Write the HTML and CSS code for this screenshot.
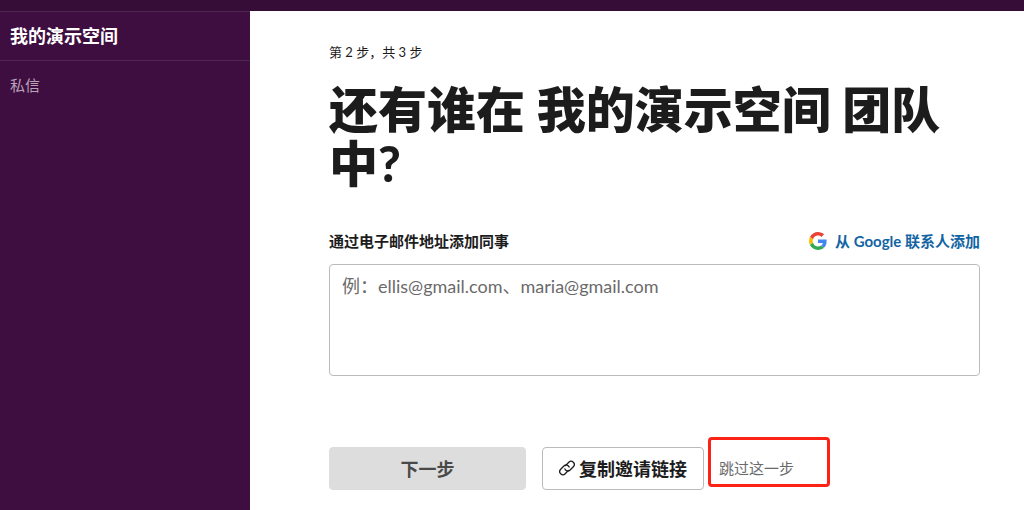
FILE: index.html
```html
<!DOCTYPE html>
<html lang="zh-CN">
<head>
    <meta charset="UTF-8">
    <meta name="viewport" content="width=device-width, initial-scale=1.0">
    <title>我的演示空间</title>
    <link rel="stylesheet" href="styles.css">
</head>
<body>
    <header class="top-bar"></header>
    <div class="workspace">
        <aside class="sidebar">
            <div class="team-name">我的演示空间</div>
            <nav class="channels">
                <a href="#">私信</a>
            </nav>
        </aside>

        <main class="setup">
            <p class="step">第 2 步，共 3 步</p>
            <h1>还有谁在 我的演示空间 团队中?</h1>

            <form>
                <div class="field-header">
                    <label for="emails">通过电子邮件地址添加同事</label>
                    <a class="google-link" href="#">
                        <svg width="18" height="18" viewBox="0 0 48 48" aria-hidden="true">
                            <path fill="#ea4335" d="M24 9.5c3.54 0 6.71 1.22 9.21 3.6l6.85-6.85C35.9 2.38 30.47 0 24 0 14.62 0 6.51 5.38 2.56 13.22l7.98 6.19C12.43 13.72 17.74 9.5 24 9.5z"/>
                            <path fill="#4285f4" d="M46.98 24.55c0-1.57-.15-3.09-.38-4.55H24v9.02h12.94c-.58 2.96-2.26 5.48-4.78 7.18l7.73 6c4.51-4.18 7.09-10.36 7.09-17.65z"/>
                            <path fill="#fbbc05" d="M10.53 28.59c-.48-1.45-.76-2.99-.76-4.59s.27-3.14.76-4.59l-7.98-6.19C.92 16.46 0 20.12 0 24c0 3.88.92 7.54 2.56 10.78l7.97-6.19z"/>
                            <path fill="#34a853" d="M24 48c6.48 0 11.93-2.13 15.89-5.81l-7.73-6c-2.15 1.45-4.92 2.3-8.16 2.3-6.26 0-11.57-4.22-13.47-9.91l-7.98 6.19C6.51 42.62 14.62 48 24 48z"/>
                        </svg>
                        从 Google 联系人添加
                    </a>
                </div>
                <textarea id="emails" name="emails" placeholder="例：ellis@gmail.com、maria@gmail.com"></textarea>

                <div class="actions">
                    <button class="btn btn-next" type="submit">下一步</button>
                    <button class="btn btn-copy" type="button">
                        <svg width="16" height="16" viewBox="0 0 16 16" fill="none" stroke="currentColor" stroke-width="1.3" stroke-linecap="round" stroke-linejoin="round" aria-hidden="true">
                            <path d="M6.6 5.6 9.8 2.3a3.2 3.2 0 0 1 4.5 0 3.2 3.2 0 0 1 0 4.5l-3.2 3.2a3.2 3.2 0 0 1-4.5 0 3 3 0 0 1-.7-1.1"/>
                            <path d="M9.4 10.4 6.2 13.7a3.2 3.2 0 0 1-4.5 0 3.2 3.2 0 0 1 0-4.5l3.2-3.2a3.2 3.2 0 0 1 4.5 0 3 3 0 0 1 .7 1.1"/>
                        </svg>
                        复制邀请链接
                    </button>
                    <a class="skip-link" href="#">跳过这一步</a>
                </div>
            </form>
        </main>
    </div>
</body>
</html>
```

FILE: styles.css
```css
* {
    box-sizing: border-box;
}

body {
    margin: 0;
    min-height: 100vh;
    display: flex;
    flex-direction: column;
    font-family: Lato, "Noto Sans CJK SC", sans-serif;
    font-size: 15px;
    color: #1d1c1d;
    background-color: #fff;
}

a {
    text-decoration: none;
}

.top-bar {
    height: 11px;
    background-color: #350d36;
}

.workspace {
    flex: 1;
    display: flex;
}

.sidebar {
    width: 250px;
    flex-shrink: 0;
    background-color: #3f0e40;
    border-top: 1px solid #522653;
}

.team-name {
    padding: 0 10px;
    border-bottom: 1px solid #522653;
    font-size: 18px;
    font-weight: bold;
    line-height: 48px;
    color: #fff;
}

.channels {
    padding: 12px 10px;
    line-height: 24px;
}

.channels a {
    color: #b9a3ba;
}

.setup {
    flex: 1;
    padding: 32px 44px 20px 79px;
}

.step {
    margin: 0;
    font-size: 13px;
    line-height: 18px;
}

h1 {
    margin: 21px 0 40px;
    font-size: 49px;
    font-weight: 900;
    line-height: 54px;
}

.field-header {
    display: flex;
    justify-content: space-between;
    align-items: center;
    margin-bottom: 12px;
    font-weight: bold;
    line-height: 22px;
}

.google-link {
    display: flex;
    align-items: center;
    gap: 8px;
    color: #1264a3;
}

textarea {
    display: block;
    width: 100%;
    height: 112px;
    padding: 7px 12px;
    border: 1px solid #bbb;
    border-radius: 4px;
    font-family: inherit;
    font-size: 18px;
    line-height: 28px;
    color: #1d1c1d;
    resize: none;
}

textarea::placeholder {
    color: #6b6a6b;
}

.actions {
    display: flex;
    align-items: flex-start;
    margin-top: 61px;
}

.btn {
    height: 43px;
    margin: 10px 0 0;
    padding: 0 16px 2px;
    border: 1px solid #bbb;
    border-radius: 4px;
    font-family: inherit;
    font-size: 18px;
    font-weight: bold;
    color: #1d1c1d;
    background-color: #fff;
    cursor: pointer;
}

.btn-next {
    width: 197px;
    margin-right: 16px;
    border-color: #ddd;
    color: #4a494a;
    background-color: #ddd;
}

.btn-copy {
    display: flex;
    align-items: center;
    gap: 4px;
}

.skip-link {
    margin-left: 4px;
    padding: 17px 33px 5px 8px;
    border: 3px solid #fc2216;
    border-radius: 4px;
    line-height: 22px;
    color: #6b6a6b;
}
```
